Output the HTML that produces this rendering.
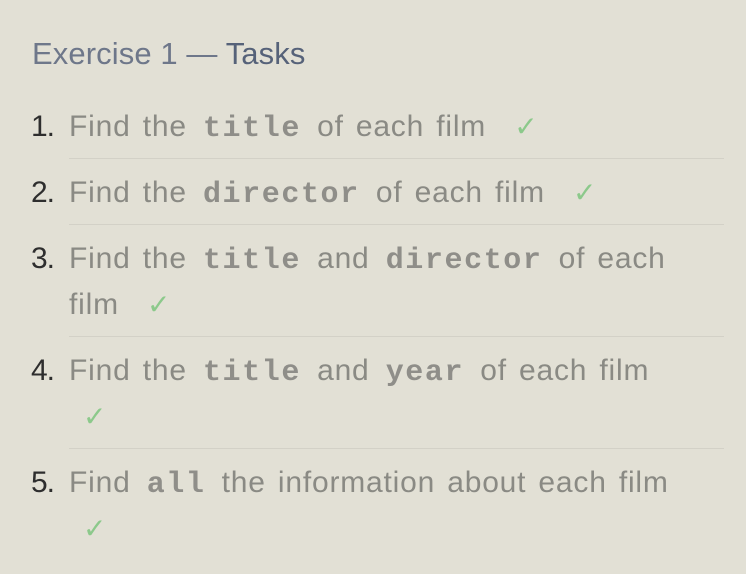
<!DOCTYPE html>
<html><head><meta charset="utf-8"><style>
html,body{margin:0;padding:0;background:#e2e0d5;width:746px;height:574px;overflow:hidden}
body{font-family:"Liberation Sans",sans-serif}
h2{position:absolute;left:32px;top:34px;margin:0;font-weight:normal;font-size:31px;color:#6e778a;line-height:40px;letter-spacing:0.1px}
h2 b{font-weight:normal;color:#566279}
ol{position:absolute;left:0;top:93px;margin:0;padding:0;list-style:none;width:724px}
li{position:relative;margin-left:69px;padding:11px 0 8px;line-height:46px;font-size:30px;color:#8a8a84;border-bottom:1px solid #d3d1c7;letter-spacing:0.8px;word-spacing:3px}
li:last-child{border-bottom:none}
li .n{position:absolute;left:-38px;top:11px;color:#2e2e2e;letter-spacing:-1px;word-spacing:0}
code{font-family:"Liberation Mono",monospace;font-weight:bold;font-size:30px;line-height:0;color:#8f8e89;padding:0 4px;letter-spacing:1.6px}
.c{color:#8cc98b;margin-left:16px;font-size:28px;line-height:0}
</style></head><body>
<h2>Exercise 1 — <b>Tasks</b></h2>
<ol>
<li><span class="n">1.</span>Find the <code>title</code> of each film <span class="c">✓</span></li>
<li><span class="n">2.</span>Find the <code>director</code> of each film <span class="c">✓</span></li>
<li><span class="n">3.</span>Find the <code>title</code> and <code>director</code> of each<br>film <span class="c">✓</span></li>
<li><span class="n">4.</span>Find the <code>title</code> and <code>year</code> of each film <br><span class="c" style="margin-left:14px">✓</span></li>
<li><span class="n">5.</span>Find <code>all</code> the information about each film <br><span class="c" style="margin-left:14px">✓</span></li>
</ol>
</body></html>
